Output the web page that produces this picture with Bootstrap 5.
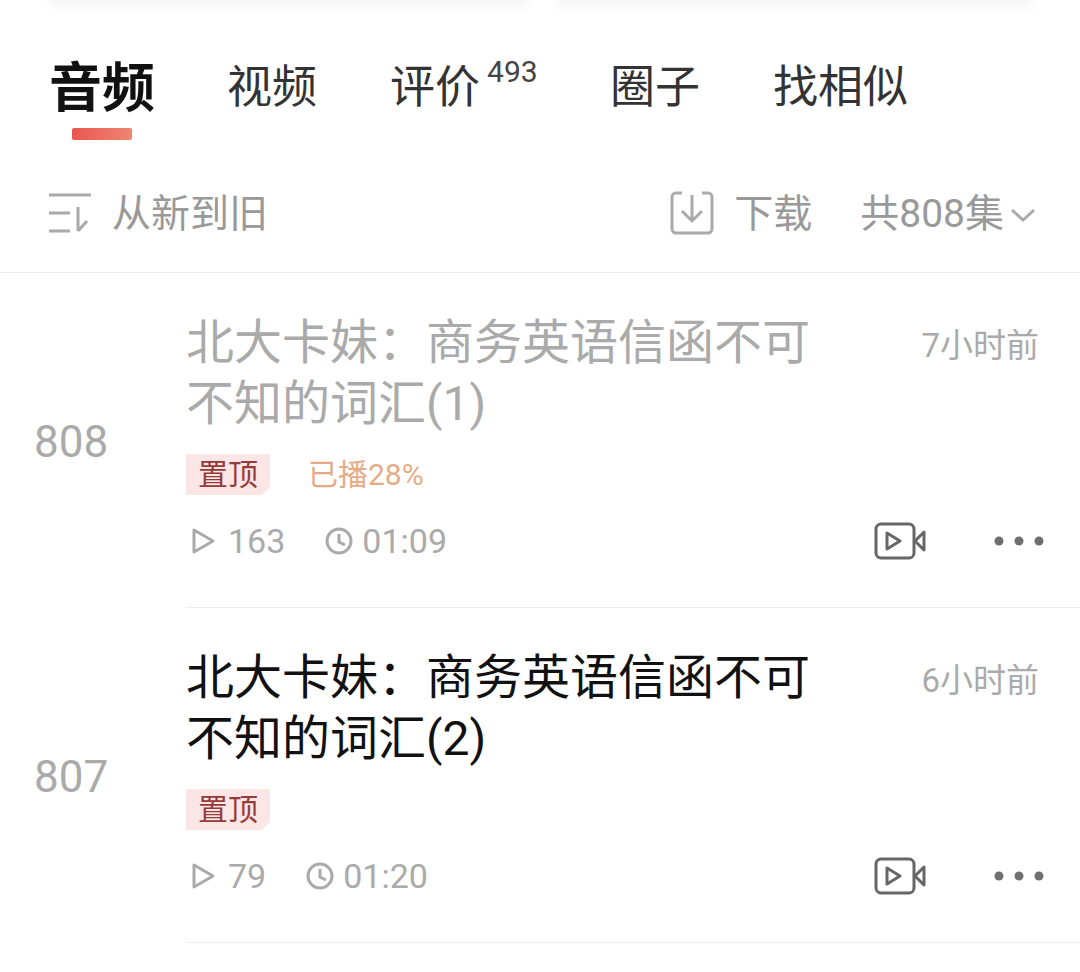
<!DOCTYPE html>
<html lang="zh">
<head>
    <meta charset="UTF-8">
    <meta name="viewport" content="width=device-width, initial-scale=1.0">
    <title>音频</title>
    <link href="https://cdn.jsdelivr.net/npm/bootstrap@5.3.0/dist/css/bootstrap.min.css" rel="stylesheet">
    <style>
        body {
            margin: 0;
            height: 972px;
            overflow: hidden;
            background: #fff;
            font-family: Roboto, "Noto Sans CJK SC", sans-serif;
        }
        .top-cards { height: 3px; padding: 0 52px 0 55px; gap: 40px; }
        .top-card {
            flex: 1;
            height: 0;
            box-shadow: 0 0 12px 5px rgba(0, 0, 0, .06);
        }
        .tab-bar { height: 135px; padding: 0 0 0 49px; gap: 73px; }
        .tab-item { font-size: 45px; line-height: 60px; color: #333; padding-top: 55px; position: relative; white-space: nowrap; }
        .tab-item.active { font-size: 53px; font-weight: 700; color: #111; padding-top: 56px; margin-right: -1px; }
        .tab-item.active::after {
            content: "";
            position: absolute;
            left: 23px;
            top: 125px;
            width: 60px;
            height: 12px;
            border-radius: 2px;
            background: linear-gradient(90deg, #e9574f, #ef8570);
        }
        .tab-count { font-size: 30px; line-height: 30px; position: absolute; left: 97px; top: 54px; color: #444; }
        .tab-spacer { padding-right: 57px; }
        .tool-bar { height: 135px; padding: 19px 44px 0 48px; border-bottom: 1px solid #eee; color: #999; font-size: 39px; }
        .tool-ic { margin-top: -4px; }
        .ep-row { height: 335px; }
        .ep-num { width: 186px; padding-left: 34px; font-size: 44px; color: #aaa; padding-top: 2px; }
        .ep-body { border-bottom: 1px solid #eee; padding: 39px 35px 0 0; }
        .ep-title { width: 640px; font-size: 48px; line-height: 61px; color: #111; }
        .ep-row.played .ep-title { color: #aaa; }
        .ep-time { font-size: 33px; color: #aaa; line-height: 46px; margin-top: 11px; white-space: nowrap; margin-right: 6px; }
        .tag-line { margin-top: 20px; height: 41px; }
        .pin-tag {
            background: #fbe6e5;
            color: #963b3b;
            font-size: 30px;
            line-height: 41px;
            width: 84px;
            text-align: center;
            clip-path: polygon(0 0, 100% 0, 100% 80%, 90% 100%, 0 100%);
        }
        .played-tag { font-size: 30px; color: #e6ab85; margin-left: 38px; line-height: 41px; }
        .stat-line { font-size: 34px; color: #aaa; height: 46px; margin-top: 23px; }
        .ic-gray { stroke: #aaa; fill: none; stroke-width: 3; }
        .stat-play { margin-left: 4px; margin-right: 12px; }
        .stat-clock { margin-left: 40px; margin-right: 9px; }
        .more-ic { margin-left: 68px; margin-right: 1px; }
        .sort-label { margin-left: 20px; }
        .dl-gap { margin-left: 20px; }
        .total-gap { margin-left: 48px; }
        .arrow-gap { margin-left: 6px; }
    </style>
</head>
<body>
    <div class="top-cards d-flex">
        <div class="top-card"></div>
        <div class="top-card"></div>
    </div>

    <!-- tabs -->
    <div class="tab-bar d-flex">
        <div class="tab-item active">音频</div>
        <div class="tab-item">视频</div>
        <div class="tab-item tab-spacer">评价<span class="tab-count">493</span></div>
        <div class="tab-item">圈子</div>
        <div class="tab-item">找相似</div>
    </div>

    <!-- sort / download -->
    <div class="tool-bar d-flex align-items-center">
        <svg width="44" height="40" viewBox="0 0 44 40" class="ic-gray tool-ic"><path d="M1 2h42M1 20h21M1 38h21M30 38V14M30 38l9-10"/></svg>
        <span class="sort-label flex-grow-1">从新到旧</span>
        <svg width="44" height="44" viewBox="0 0 44 44" class="ic-gray tool-ic"><path d="M12 2H6a4 4 0 0 0-4 4v32a4 4 0 0 0 4 4h32a4 4 0 0 0 4-4V6a4 4 0 0 0-4-4h-6M22 4v26M12 20l10 10 10-10"/></svg>
        <span class="dl-gap">下载</span>
        <span class="total-gap">共808集</span>
        <svg width="26" height="14" viewBox="0 0 26 14" class="ic-gray arrow-gap"><path d="M2 2l11 10L24 2"/></svg>
    </div>

    <div class="ep-row played d-flex">
        <div class="ep-num d-flex align-items-center">808</div>
        <div class="ep-body flex-grow-1">
            <div class="d-flex justify-content-between">
                <div class="ep-title">北大卡妹：商务英语信函不可不知的词汇(1)</div>
                <div class="ep-time">7小时前</div>
            </div>
            <div class="d-flex align-items-center tag-line">
                <div class="pin-tag">置顶</div>
                <div class="played-tag">已播28%</div>
            </div>
            <div class="stat-line d-flex align-items-center">
                <svg width="26" height="28" viewBox="0 0 26 28" class="ic-gray stat-play"><path d="M4 3v22l19-11z" stroke-linejoin="round"/></svg>
                <span>163</span>
                <svg width="28" height="28" viewBox="0 0 28 28" class="ic-gray stat-clock"><circle cx="14" cy="14" r="12"/><path d="M14 7v8l6 3"/></svg>
                <span>01:09</span>
                <svg width="52" height="38" viewBox="0 0 52 38" class="ms-auto" fill="none" stroke="#666" stroke-width="3" stroke-linejoin="round"><rect x="2" y="2" width="38" height="34" rx="5"/><path d="M13 11v16l13-8z"/><path d="M50 10v18l-9-9z"/></svg>
                <svg width="50" height="10" viewBox="0 0 50 10" class="more-ic" fill="#6f6f6f"><circle cx="5" cy="5" r="4.5"/><circle cx="25" cy="5" r="4.5"/><circle cx="45" cy="5" r="4.5"/></svg>
            </div>
        </div>
    </div>

    <div class="ep-row d-flex">
        <div class="ep-num d-flex align-items-center">807</div>
        <div class="ep-body flex-grow-1">
            <div class="d-flex justify-content-between">
                <div class="ep-title">北大卡妹：商务英语信函不可不知的词汇(2)</div>
                <div class="ep-time">6小时前</div>
            </div>
            <div class="d-flex align-items-center tag-line">
                <div class="pin-tag">置顶</div>
            </div>
            <div class="stat-line d-flex align-items-center">
                <svg width="26" height="28" viewBox="0 0 26 28" class="ic-gray stat-play"><path d="M4 3v22l19-11z" stroke-linejoin="round"/></svg>
                <span>79</span>
                <svg width="28" height="28" viewBox="0 0 28 28" class="ic-gray stat-clock"><circle cx="14" cy="14" r="12"/><path d="M14 7v8l6 3"/></svg>
                <span>01:20</span>
                <svg width="52" height="38" viewBox="0 0 52 38" class="ms-auto" fill="none" stroke="#666" stroke-width="3" stroke-linejoin="round"><rect x="2" y="2" width="38" height="34" rx="5"/><path d="M13 11v16l13-8z"/><path d="M50 10v18l-9-9z"/></svg>
                <svg width="50" height="10" viewBox="0 0 50 10" class="more-ic" fill="#6f6f6f"><circle cx="5" cy="5" r="4.5"/><circle cx="25" cy="5" r="4.5"/><circle cx="45" cy="5" r="4.5"/></svg>
            </div>
        </div>
    </div>

    <script src="https://cdn.jsdelivr.net/npm/bootstrap@5.3.0/dist/js/bootstrap.bundle.min.js"></script>
</body>
</html>
